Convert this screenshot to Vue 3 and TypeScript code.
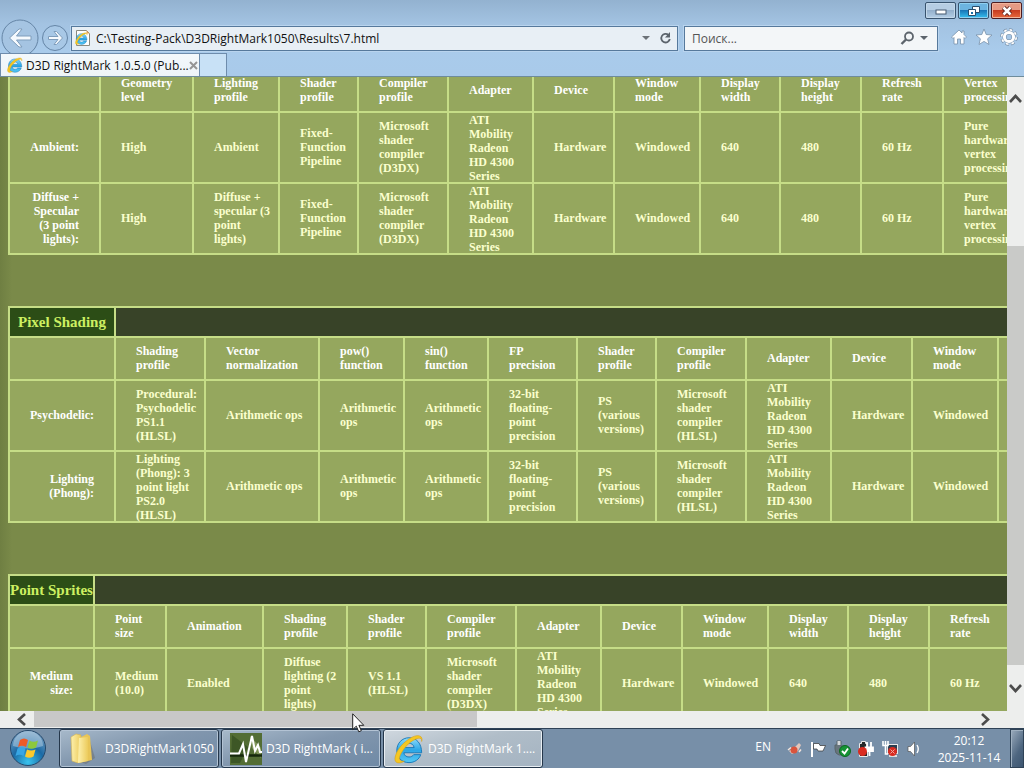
<script setup lang="ts">
interface Row {
  label: string
  values: string[]
}
interface Report {
  title: string
  widths: number[]
  headers: string[]
  rows: Row[]
}

const gpu = 'ATI\nMobility\nRadeon\nHD 4300\nSeries'
const d3dx = 'Microsoft\nshader\ncompiler\n(D3DX)'
const hlsl = 'Microsoft\nshader\ncompiler\n(HLSL)'
const fixed = 'Fixed-\nFunction\nPipeline'
const vertex = 'Pure\nhardware\nvertex\nprocessing'
const precision = '32-bit\nfloating-\npoint\nprecision'
const various = 'PS\n(various\nversions)'

const reports: Report[] = [
  {
    title: '',
    widths: [91, 93, 86, 79, 90, 85, 81, 86, 80, 81, 82, 108],
    headers: ['Geometry\nlevel', 'Lighting\nprofile', 'Shader\nprofile', 'Compiler\nprofile', 'Adapter', 'Device', 'Window\nmode', 'Display\nwidth', 'Display\nheight', 'Refresh\nrate', 'Vertex\nprocessing'],
    rows: [
      { label: 'Ambient:', values: ['High', 'Ambient', fixed, d3dx, gpu, 'Hardware', 'Windowed', '640', '480', '60 Hz', vertex] },
      { label: 'Diffuse +\nSpecular\n(3 point\nlights):', values: ['High', 'Diffuse +\nspecular (3\npoint\nlights)', fixed, d3dx, gpu, 'Hardware', 'Windowed', '640', '480', '60 Hz', vertex] },
    ],
  },
  {
    title: 'Pixel Shading',
    widths: [106, 90, 114, 85, 84, 89, 79, 90, 85, 81, 86, 80],
    headers: ['Shading\nprofile', 'Vector\nnormalization', 'pow()\nfunction', 'sin()\nfunction', 'FP\nprecision', 'Shader\nprofile', 'Compiler\nprofile', 'Adapter', 'Device', 'Window\nmode', 'Display\nwidth'],
    rows: [
      { label: 'Psychodelic:', values: ['Procedural:\nPsychodelic\nPS1.1\n(HLSL)', 'Arithmetic ops', 'Arithmetic\nops', 'Arithmetic\nops', precision, various, hlsl, gpu, 'Hardware', 'Windowed', '640'] },
      { label: 'Lighting\n(Phong):', values: ['Lighting\n(Phong): 3\npoint light\nPS2.0\n(HLSL)', 'Arithmetic ops', 'Arithmetic\nops', 'Arithmetic\nops', precision, various, hlsl, gpu, 'Hardware', 'Windowed', '640'] },
    ],
  },
  {
    title: 'Point Sprites',
    widths: [85, 72, 97, 84, 79, 90, 85, 81, 86, 80, 81, 82],
    headers: ['Point\nsize', 'Animation', 'Shading\nprofile', 'Shader\nprofile', 'Compiler\nprofile', 'Adapter', 'Device', 'Window\nmode', 'Display\nwidth', 'Display\nheight', 'Refresh\nrate'],
    rows: [
      { label: 'Medium\nsize:', values: ['Medium\n(10.0)', 'Enabled', 'Diffuse\nlighting (2\npoint\nlights)', 'VS 1.1\n(HLSL)', d3dx, gpu, 'Hardware', 'Windowed', '640', '480', '60 Hz'] },
    ],
  },
]

const total = (widths: number[]): number => widths.reduce((a, b) => a + b, 2)
</script>

<template>
  <div class="desktop">
    <svg class="defs" aria-hidden="true">
      <defs>
        <linearGradient id="ieBlue" x1="0" y1="0" x2="0" y2="1">
          <stop offset="0" stop-color="#8fdcfa" /><stop offset=".5" stop-color="#2ba6e6" /><stop offset="1" stop-color="#55c8f4" />
        </linearGradient>
        <linearGradient id="folderA" x1="0" y1="0" x2="1" y2="0">
          <stop offset="0" stop-color="#fdf0ac" /><stop offset="1" stop-color="#eccb5c" />
        </linearGradient>
        <radialGradient id="orb" cx=".5" cy=".9" r=".9">
          <stop offset="0" stop-color="#39c3ee" /><stop offset=".5" stop-color="#1b6aa5" /><stop offset="1" stop-color="#7fa5c6" />
        </radialGradient>
        <symbol id="ie" viewBox="0 0 32 32">
          <path d="M22 20H10.500C11 23 13 24.500 16 24.500C18.500 24.500 20 23.500 21 22H28.500C27 27 22 30.500 16 30.500C8 30.500 3 25 3 17.500C3 10 8.500 4 16 4C24 4 29.500 10 29.500 20ZM10.500 14.500H21.500C21 11.500 18.500 9.800 16 9.800C13.200 9.800 11.200 11.600 10.500 14.500Z" fill="url(#ieBlue)" stroke="#1878b8" stroke-width="1" />
          <path d="M29.500 8C31.500 2 26 0 19 3.500C9 9 2 18 1 26C.5 31.500 6 32 11 29C7 29.500 4.500 28 6.500 23C9.500 16 16 8.500 23 5.500C27.500 3.500 30 4.500 29.500 8Z" fill="#f5c722" stroke="#d79e14" stroke-width=".6" />
        </symbol>
      </defs>
    </svg>

    <header class="browser">
      <div class="window-buttons">
        <button class="win" aria-label="Minimize"><svg width="14" height="10"><rect x="2" y="4" width="10" height="4" fill="#fff" stroke="#465a70" /></svg></button>
        <button class="win restore" aria-label="Restore"><svg width="14" height="12"><path d="M5.500 1.500H12.500V7.500H5.500Z" fill="#fff" stroke="#284d6c" /><path d="M1.500 4.500H8.500V10.500H1.500Z" fill="#fff" stroke="#284d6c" /><rect x="4" y="7" width="2" height="2" fill="#1870a8" /></svg></button>
        <button class="win close" aria-label="Close"><svg width="14" height="12"><path d="M3.500 2.500L10.500 9.500M10.500 2.500L3.500 9.500" stroke="#5b2018" stroke-width="4.500" /><path d="M3.500 2.500L10.500 9.500M10.500 2.500L3.500 9.500" stroke="#fff" stroke-width="2.600" /></svg></button>
      </div>
      <div class="toolbar">
        <div class="history">
          <button class="nav back" aria-label="Back"><svg width="40" height="40" viewBox="0 0 40 40"><circle cx="19" cy="20" r="18" fill="#a5c4e2" stroke="#6585a6" /><path d="M8.500 20L18 11H21L15.500 18H30V22H15.500L21 29H18Z" fill="#f6fafe" stroke="#7f9dbb" stroke-width="1" /></svg></button>
          <button class="nav" aria-label="Forward"><svg width="28" height="28" viewBox="0 0 28 28"><circle cx="13" cy="14" r="12.500" fill="#a8c8e6" stroke="#6585a6" /><path d="M20.500 14L14.500 7.500H12L16 12.500H6.500V15.500H16L12 20.500H14.500Z" fill="#f6fafe" stroke="#7f9dbb" /></svg></button>
        </div>
        <div class="address box">
          <svg width="16" height="18" viewBox="0 0 16 18"><path d="M1.500 1.500H11.500L14.500 4.500V16.500H1.500Z" fill="#fff" stroke="#8a8a80" /><path d="M11.500 1.500V4.500H14.500Z" fill="#e8a050" /><use href="#ie" x="0" y="3" width="13" height="13" /></svg>
          <input class="url" aria-label="Address" value="C:\Testing-Pack\D3DRightMark1050\Results\7.html">
          <button class="plain" aria-label="Show addresses"><svg width="8" height="5"><path d="M0 0H8L4 4Z" fill="#6c7278" /></svg></button>
          <button class="plain" aria-label="Refresh"><svg width="13" height="14" viewBox="0 0 13 14"><path d="M9.500 4A4.300 4.300 0 1 0 10.800 8" fill="none" stroke="#5c646c" stroke-width="1.800" /><path d="M11 1V6.500H6Z" fill="#5c646c" /></svg></button>
        </div>
        <div class="search box">
          <input aria-label="Search" placeholder="Поиск...">
          <button class="plain" aria-label="Search"><svg width="15" height="14" viewBox="0 0 15 14"><circle cx="9" cy="5.500" r="4" fill="none" stroke="#5c646c" stroke-width="1.800" /><path d="M6 8.500L1.500 13" stroke="#5c646c" stroke-width="2.400" /></svg></button>
          <button class="plain" aria-label="Search options"><svg width="8" height="5"><path d="M0 0H8L4 4Z" fill="#5c646c" /></svg></button>
        </div>
        <div class="tools">
          <button class="plain" aria-label="Home"><svg width="18" height="18" viewBox="0 0 18 18"><path d="M9 2L1.500 9L3 10.500L4 9.500V16H7.500V11H10.500V16H14V9.500L15 10.500L16.500 9L14 6.500V3H12V5Z" fill="#fff" stroke="#7790aa" stroke-width=".8" /></svg></button>
          <button class="plain" aria-label="Favorites"><svg width="18" height="18" viewBox="0 0 18 18"><path d="M9 1L11.200 6.500L17 7L12.600 10.800L14 16.500L9 13.400L4 16.500L5.400 10.800L1 7L6.800 6.500Z" fill="#fff" stroke="#7790aa" stroke-width=".8" /></svg></button>
          <button class="plain" aria-label="Tools"><svg width="18" height="18" viewBox="0 0 18 18"><circle cx="9" cy="9" r="6.800" fill="none" stroke="#7790aa" stroke-width="4" stroke-dasharray="3.200 2.140" /><circle cx="9" cy="9" r="6.800" fill="none" stroke="#fff" stroke-width="2.600" stroke-dasharray="2.600 2.740" stroke-dashoffset="-.3" /><circle cx="9" cy="9" r="4.500" fill="none" stroke="#7790aa" stroke-width="4" /><circle cx="9" cy="9" r="4.600" fill="none" stroke="#fff" stroke-width="3" /></svg></button>
        </div>
      </div>
      <div class="tabs">
        <div class="tab">
          <svg width="16" height="16"><use href="#ie" width="16" height="16" /></svg>
          <span>D3D RightMark 1.0.5.0 (Pub...</span>
          <button class="plain" aria-label="Close tab"><svg width="9" height="9"><path d="M1 1L8 8M8 1L1 8" stroke="#959595" stroke-width="2" /></svg></button>
        </div>
        <button class="new-tab" aria-label="New tab"></button>
      </div>
    </header>

    <div class="view">
      <main class="page">
        <table v-for="(report, i) in reports" :key="i" :style="{ width: total(report.widths) + 'px' }">
          <colgroup>
            <col v-for="(w, c) in report.widths" :key="c" :style="{ width: w + 'px' }">
          </colgroup>
          <thead>
            <tr v-if="report.title" class="title-row">
              <th class="title">{{ report.title }}</th>
              <td class="strip" :colspan="report.headers.length"></td>
            </tr>
            <tr class="head-row">
              <td></td>
              <th v-for="(h, c) in report.headers" :key="c" scope="col"><div class="text">{{ h }}</div></th>
            </tr>
          </thead>
          <tbody>
            <tr v-for="(row, r) in report.rows" :key="r" class="data-row">
              <th scope="row" class="label"><div class="text">{{ row.label }}</div></th>
              <td v-for="(v, c) in row.values" :key="c"><div class="text">{{ v }}</div></td>
            </tr>
          </tbody>
        </table>
      </main>
      <div class="vbar">
        <button class="plain arrow-up" aria-label="Scroll up"><svg width="13" height="9"><path d="M1 8L6.500 2L12 8" fill="none" stroke="#4c4c4c" stroke-width="2.600" /></svg></button>
        <div class="vtrack"><div class="vthumb"></div></div>
        <button class="plain arrow-down" aria-label="Scroll down"><svg width="13" height="9"><path d="M1 1L6.500 7L12 1" fill="none" stroke="#4c4c4c" stroke-width="2.600" /></svg></button>
      </div>
    </div>

    <div class="hbar">
      <button class="plain arrow-left" aria-label="Scroll left"><svg width="9" height="13"><path d="M8 1L2 6.500L8 12" fill="none" stroke="#4c4c4c" stroke-width="2.600" /></svg></button>
      <div class="htrack"><div class="hthumb"></div></div>
      <button class="plain arrow-right" aria-label="Scroll right"><svg width="9" height="13"><path d="M1 1L7 6.500L1 12" fill="none" stroke="#4c4c4c" stroke-width="2.600" /></svg></button>
    </div>

    <footer class="taskbar">
      <button class="start" aria-label="Start">
        <svg width="38" height="38" viewBox="0 0 38 38"><circle cx="19" cy="19" r="17.500" fill="url(#orb)" stroke="#24486b" /><path d="M4 17A15 15 0 0 1 34 17Q19 22 4 17Z" fill="#c8dcea" opacity=".45" /><path d="M11 11Q15 8 19 11L17 18Q13 15.500 9 18Z" fill="#ee5a26" /><path d="M20.500 11.500Q24.500 14 29 11.500L27 18.500Q22.500 21 18.500 18.500Z" fill="#8cc83c" /><path d="M8.500 19.500Q12.500 17 16.500 19.500L14.500 27Q10.500 24.500 6.500 27Z" fill="#38a6e4" /><path d="M18 20.500Q22 22.500 26.500 20.500L24.500 27.500Q20 30 16 27.500Z" fill="#fdc92c" /></svg>
      </button>
      <button class="task"><svg width="30" height="34" viewBox="0 0 30 34"><path d="M22 9L27 26L18 32L12 30Z" fill="#61584a" opacity=".35" /><path d="M3 5L8 2L13 3V28L10 31L4 29Z" fill="url(#folderA)" stroke="#d5b452" stroke-width=".6" /><path d="M13 5L19 2L22 4L24 28L11 31Z" fill="#e8c557" /><path d="M11 6L20 5V29L10 31Z" fill="url(#folderA)" /></svg><span>D3DRightMark1050</span></button>
      <button class="task"><svg width="32" height="32" viewBox="0 0 32 32"><rect width="32" height="32" fill="#536d34" /><path d="M2 2L18 14L10 30H1Z" fill="#3d5726" /><path d="M20 3L31 15V25L22 15Z" fill="#81955a" /><path d="M0 22.500H32" stroke="#16280c" stroke-width="2.500" /><path d="M0 20.500H9L13 11L16 29L22 3L25 18L28 12L30 19H32" fill="none" stroke="#fff" stroke-width="2" /></svg><span>D3D RightMark ( i...</span></button>
      <button class="task active"><svg width="32" height="32"><use href="#ie" x="2" y="1" width="30" height="30" /></svg><span>D3D RightMark 1....</span></button>

      <div class="tray">
        <span class="lang">EN</span>
        <svg width="16" height="16"><path d="M2 10L8 6L12 2L14 4L11 10L5 13Z" fill="#e2c6bc" /><circle cx="7" cy="9" r="3.500" fill="#d9543c" /><path d="M1 9L4 6.500M12 11L14 8.500" stroke="#f3e4dc" stroke-width="1.500" /></svg>
        <svg width="18" height="18"><path d="M3 2V17" stroke="#fff" stroke-width="2" /><path d="M4.500 3.500H10L11 5.500H16.500L14 11H9L8 9H4.500Z" fill="#fff" stroke="#333" stroke-width=".7" /></svg>
        <svg width="18" height="18"><path d="M4 1H8V6H11V15H6Q2 14 2 9V5H4Z" fill="#68767d" stroke="#59646a" /><path d="M4.500 1V5H7.500V1" fill="#d5d9dc" /><circle cx="12" cy="11" r="5.500" fill="#159435" stroke="#0b6a20" /><path d="M9 11L11.500 13.500L15 8.500" fill="none" stroke="#fff" stroke-width="1.800" /></svg>
        <svg width="18" height="18"><path d="M2.500 16.500V3.500H4.500V1.500H8.500V3.500H10.500V16.500Z" fill="#24282a" stroke="#e8e8e8" /><path d="M10 2V7M14 2V7M8.500 7.500H16V11H8.500ZM12.500 11V16" fill="#fff" stroke="#fff" stroke-width="1.800" /><circle cx="5.500" cy="11.500" r="4.500" fill="#d92b20" /></svg>
        <svg width="18" height="18"><rect x="6.500" y="4.500" width="10" height="9" fill="#2a3e50" stroke="#e8e8e8" /><path d="M8 16H16" stroke="#ddd" stroke-width="2" /><path d="M2 1V5.500H7V1M4.500 1V14H7" fill="none" stroke="#fff" stroke-width="1.600" /><circle cx="11.500" cy="11.500" r="4.500" fill="#d92b20" /><path d="M9.500 9.500L13.500 13.500M13.500 9.500L9.500 13.500" stroke="#f0a8a0" /></svg>
        <svg width="18" height="18"><path d="M3 6.500H5.500L9.500 2V16L5.500 11.500H3Z" fill="#fff" stroke="#555" stroke-width=".7" /><path d="M12 5Q14.500 9 12 13" fill="none" stroke="#fff" stroke-width="1.400" /></svg>
      </div>
      <div class="clock"><span>20:12</span><span>2025-11-14</span></div>
      <button class="show-desktop" aria-label="Show desktop"></button>
    </footer>

    <svg class="pointer" width="13" height="20" viewBox="0 0 13 20"><path d="M.7.8V16.500L4.300 13.200L6.800 18.800L9.300 17.700L6.900 12.300H11.800Z" fill="#fff" stroke="#222" /></svg>
  </div>
</template>

<style>
html, body, #app { height: 100%; }
body { margin: 0; overflow: hidden; }
</style>

<style scoped>
.desktop {
  position: relative;
  height: 100vh;
  display: flex;
  flex-direction: column;
  overflow: hidden;
  font: 12px/17px "Open Sans", "Noto Sans", sans-serif;
  color: #111;
}
.defs { position: absolute; width: 0; height: 0; }
button, input { font: inherit; color: inherit; margin: 0; padding: 0; }
svg { display: block; flex: none; }
.plain { border: 0; background: none; display: flex; align-items: center; justify-content: center; }

.browser {
  flex: none;
  height: 76px;
  display: flex;
  flex-direction: column;
  background: linear-gradient(#93b2d0, #a3c3e2 24px, #a9cbeb 50px, #a9caea);
  border-bottom: 1px solid #6e8c9c;
}
.window-buttons { height: 19px; display: flex; justify-content: flex-end; gap: 2px; padding-right: 2px; }
.win {
  box-sizing: border-box;
  width: 31px;
  height: 17px;
  margin-top: 2px;
  display: flex;
  align-items: center;
  justify-content: center;
  border: 1px solid #38536e;
  border-radius: 2px;
  box-shadow: inset 0 0 0 1px #c3d8ea;
  background: linear-gradient(#b6cde3 50%, #94b0cc 50%, #b4cee6);
}
.restore { background: linear-gradient(#6cb4e0 45%, #1a77b8 50%, #35c0f0); box-shadow: inset 0 0 0 1px #8fd0f0; }
.close { background: linear-gradient(#e69a84 45%, #c73c20 50%, #e8683c); box-shadow: inset 0 0 0 1px #f0b49c; border-color: #4c1c20; }
.toolbar { height: 34px; display: flex; align-items: center; }
.history { width: 71px; display: flex; align-items: center; padding-top: 3px; box-sizing: border-box; }
.nav { border: 0; background: none; margin-left: 1px; }
.back { height: 40px; }
.box {
  box-sizing: border-box;
  height: 25px;
  display: flex;
  align-items: center;
  border: 1px solid #56799c;
  box-shadow: 0 0 0 1px #b9d4ee;
  background: #e8eff5;
  margin-top: 4px;
}
.box input { flex: 1; min-width: 0; border: 0; outline: 0; background: none; height: 20px; }
.address { flex: 1; padding: 0 5px 0 3px; gap: 9px; }
.address .url { margin-left: -4px; }
.search { width: 254px; margin-left: 6px; padding: 0 9px 0 7px; gap: 5px; background: #f3f6f8; }
.search input::placeholder { color: #555; opacity: 1; }
.tools { width: 86px; display: flex; justify-content: center; gap: 7px; padding: 2px 0 0 6px; box-sizing: border-box; }
.tabs { flex: 1; display: flex; }
.tab {
  box-sizing: border-box;
  width: 200px;
  display: flex;
  align-items: center;
  padding: 0 6px;
  background: linear-gradient(#f3f8fc, #eef4f7);
  border: 1px solid #6e8cac;
  border-bottom: 0;
}
.tab span { flex: 1; margin-left: 3px; white-space: nowrap; }
.new-tab { width: 27px; border: 1px solid #6e8cac; border-width: 1px 1px 0 0; background: #c8e1f6; }

.view { flex: 1; min-height: 0; display: flex; }
.page {
  flex: 1;
  min-width: 0;
  overflow: hidden;
  padding-left: 8px;
  background: linear-gradient(90deg, #6f7f42, #7a8a49 12px);
  font: bold 12px/14px "Liberation Serif", serif;
}
table { table-layout: fixed; border-collapse: collapse; margin: 0 0 51px; }
table:first-child { margin-top: -9px; }
th, td {
  box-sizing: border-box;
  border: 2px solid #c6dd87;
  padding: 0 0 1px 20px;
  background: #95a75e;
  color: #fbffce;
  text-align: left;
  vertical-align: middle;
}
th { color: #fff; }
.text { max-height: 68px; white-space: pre; }
.head-row { height: 43px; }
.title-row { height: 30px; }
.data-row { height: 71px; }
.label { padding: 0 20px 1px 0; }
.label .text { text-align: right; }
.title { padding: 0; background: #2c4d16; color: #cdf062; font-size: 15px; text-align: center; white-space: nowrap; }
.strip { background: #384328; }

.vbar { flex: none; width: 17px; display: flex; flex-direction: column; background: #edeeed; }
.vbar button { height: 42px; }
.vbar .arrow-down { height: 46px; }
.vtrack { flex: 1; display: flex; flex-direction: column; }
.vthumb { margin-top: 127px; flex: 1; background: #c9cac8; }
.hbar { flex: none; height: 17px; display: flex; background: #edeeed; }
.hbar button { width: 34px; padding-left: 9px; }
.hbar .arrow-right { width: 68px; padding-left: 0; padding-right: 9px; }
.htrack { flex: 1; }
.hthumb { width: 48%; height: 16px; background: #c8c8c8; }

.taskbar {
  flex: none;
  box-sizing: border-box;
  height: 40px;
  display: flex;
  background: #778fa8;
  border-top: 1px solid #2f4257;
  color: #fff;
}
.start { width: 55px; border: 0; background: none; display: flex; justify-content: center; }
.task {
  box-sizing: border-box;
  width: 160px;
  margin-left: 2px;
  display: flex;
  align-items: center;
  gap: 4px;
  padding: 0 8px;
  border: 1px solid #25374b;
  border-radius: 3px;
  box-shadow: inset 0 0 0 1px #b3c3d4;
  background: linear-gradient(165deg, #a7b9ca, #8297ae 45%, #6f89a5);
  white-space: nowrap;
}
.start + .task { margin-left: 4px; }
.start + .task span { margin-left: 3px; }
.active { background: linear-gradient(165deg, #d0d8df, #b0bdc8 45%, #a4b3c1); box-shadow: inset 0 0 0 1px #e8eef3; }
.tray { margin-left: auto; display: flex; align-items: center; gap: 6px; }
.lang { margin-right: 10px; padding-bottom: 5px; }
.clock { width: 82px; margin-left: 5px; display: flex; flex-direction: column; align-items: center; justify-content: center; }
.show-desktop { width: 14px; border: 1px solid #2f4357; box-shadow: inset 1px 1px 0 #9fb0c0; background: linear-gradient(120deg, #9bacbd, #4e6680 60%, #3c5570); }
.pointer { position: absolute; left: 352px; top: 713px; }
</style>
